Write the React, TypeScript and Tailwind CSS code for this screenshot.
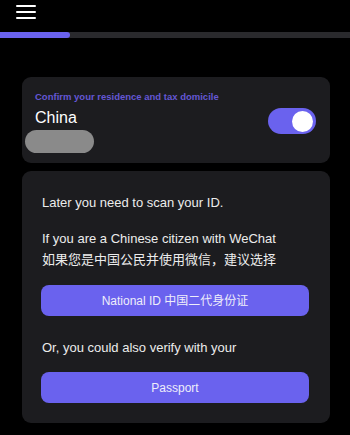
import React from "react";

export default function App() {
  const font = { fontFamily: '"Liberation Sans", Arial, "Noto Sans CJK SC", sans-serif' };
  return (
    <div className="w-[350px] h-[435px] bg-black overflow-hidden" style={font}>
      {/* header */}
      <div className="pt-[5px] pl-4">
        <div className="flex flex-col gap-[4px] w-[20px]">
          <div className="h-[2px] bg-white rounded-full" />
          <div className="h-[2px] bg-white rounded-full" />
          <div className="h-[2px] bg-white rounded-full" />
        </div>
      </div>
      {/* progress */}
      <div className="mt-[13px] h-[6px] bg-[#2a2a2d] flex">
        <div className="w-[70px] h-full bg-[#6a62ee] rounded-r-full" />
      </div>
      {/* card 1 */}
      <div className="mt-[39px] ml-[22px] w-[308px] bg-[#1c1c1f] rounded-[9px] pt-[13px] pb-[10px] pl-[13px] pr-[14px]">
        <div className="text-[9.5px] leading-[13px] font-bold text-[#6457d4]">
          Confirm your residence and tax domicile
        </div>
        <div className="flex justify-between items-start">
          <div className="flex flex-col">
            <div className="mt-[4px] text-[16px] leading-[22px] text-white">China</div>
            <div className="mt-[1px] -ml-[10px] w-[69px] h-[23px] rounded-full bg-[#8a8a8a]" />
          </div>
          <div className="mt-[5px] w-[48px] h-[26px] rounded-full bg-[#6a62ee] flex items-center justify-end pr-[3px]">
            <div className="w-[21px] h-[21px] rounded-full bg-white" />
          </div>
        </div>
      </div>
      {/* card 2 */}
      <div className="mt-[8px] ml-[22px] w-[308px] bg-[#1c1c1f] rounded-[9px] pt-[22px] pb-[20px] pl-[19px] pr-[21px] text-[#ececec]">
        <div className="text-[13px] leading-[20px] pl-[1px]">Later you need to scan your ID.</div>
        <div className="mt-[15px] text-[13px] leading-[21px] pl-[1px]">
          <div>If you are a Chinese citizen with WeChat</div>
          <div>如果您是中国公民并使用微信，建议选择</div>
        </div>
        <button className="mt-[15px] w-full h-[31px] rounded-[8px] bg-[#6a62ee] text-[12px] text-[#eeeefa] flex items-center justify-center">
          National ID 中国二代身份证
        </button>
        <div className="mt-[22px] text-[13px] leading-[20px] pl-[1px]">Or, you could also verify with your</div>
        <button className="mt-[14px] w-full h-[31px] rounded-[8px] bg-[#6a62ee] text-[12px] text-[#eeeefa] flex items-center justify-center">
          Passport
        </button>
      </div>
    </div>
  );
}
